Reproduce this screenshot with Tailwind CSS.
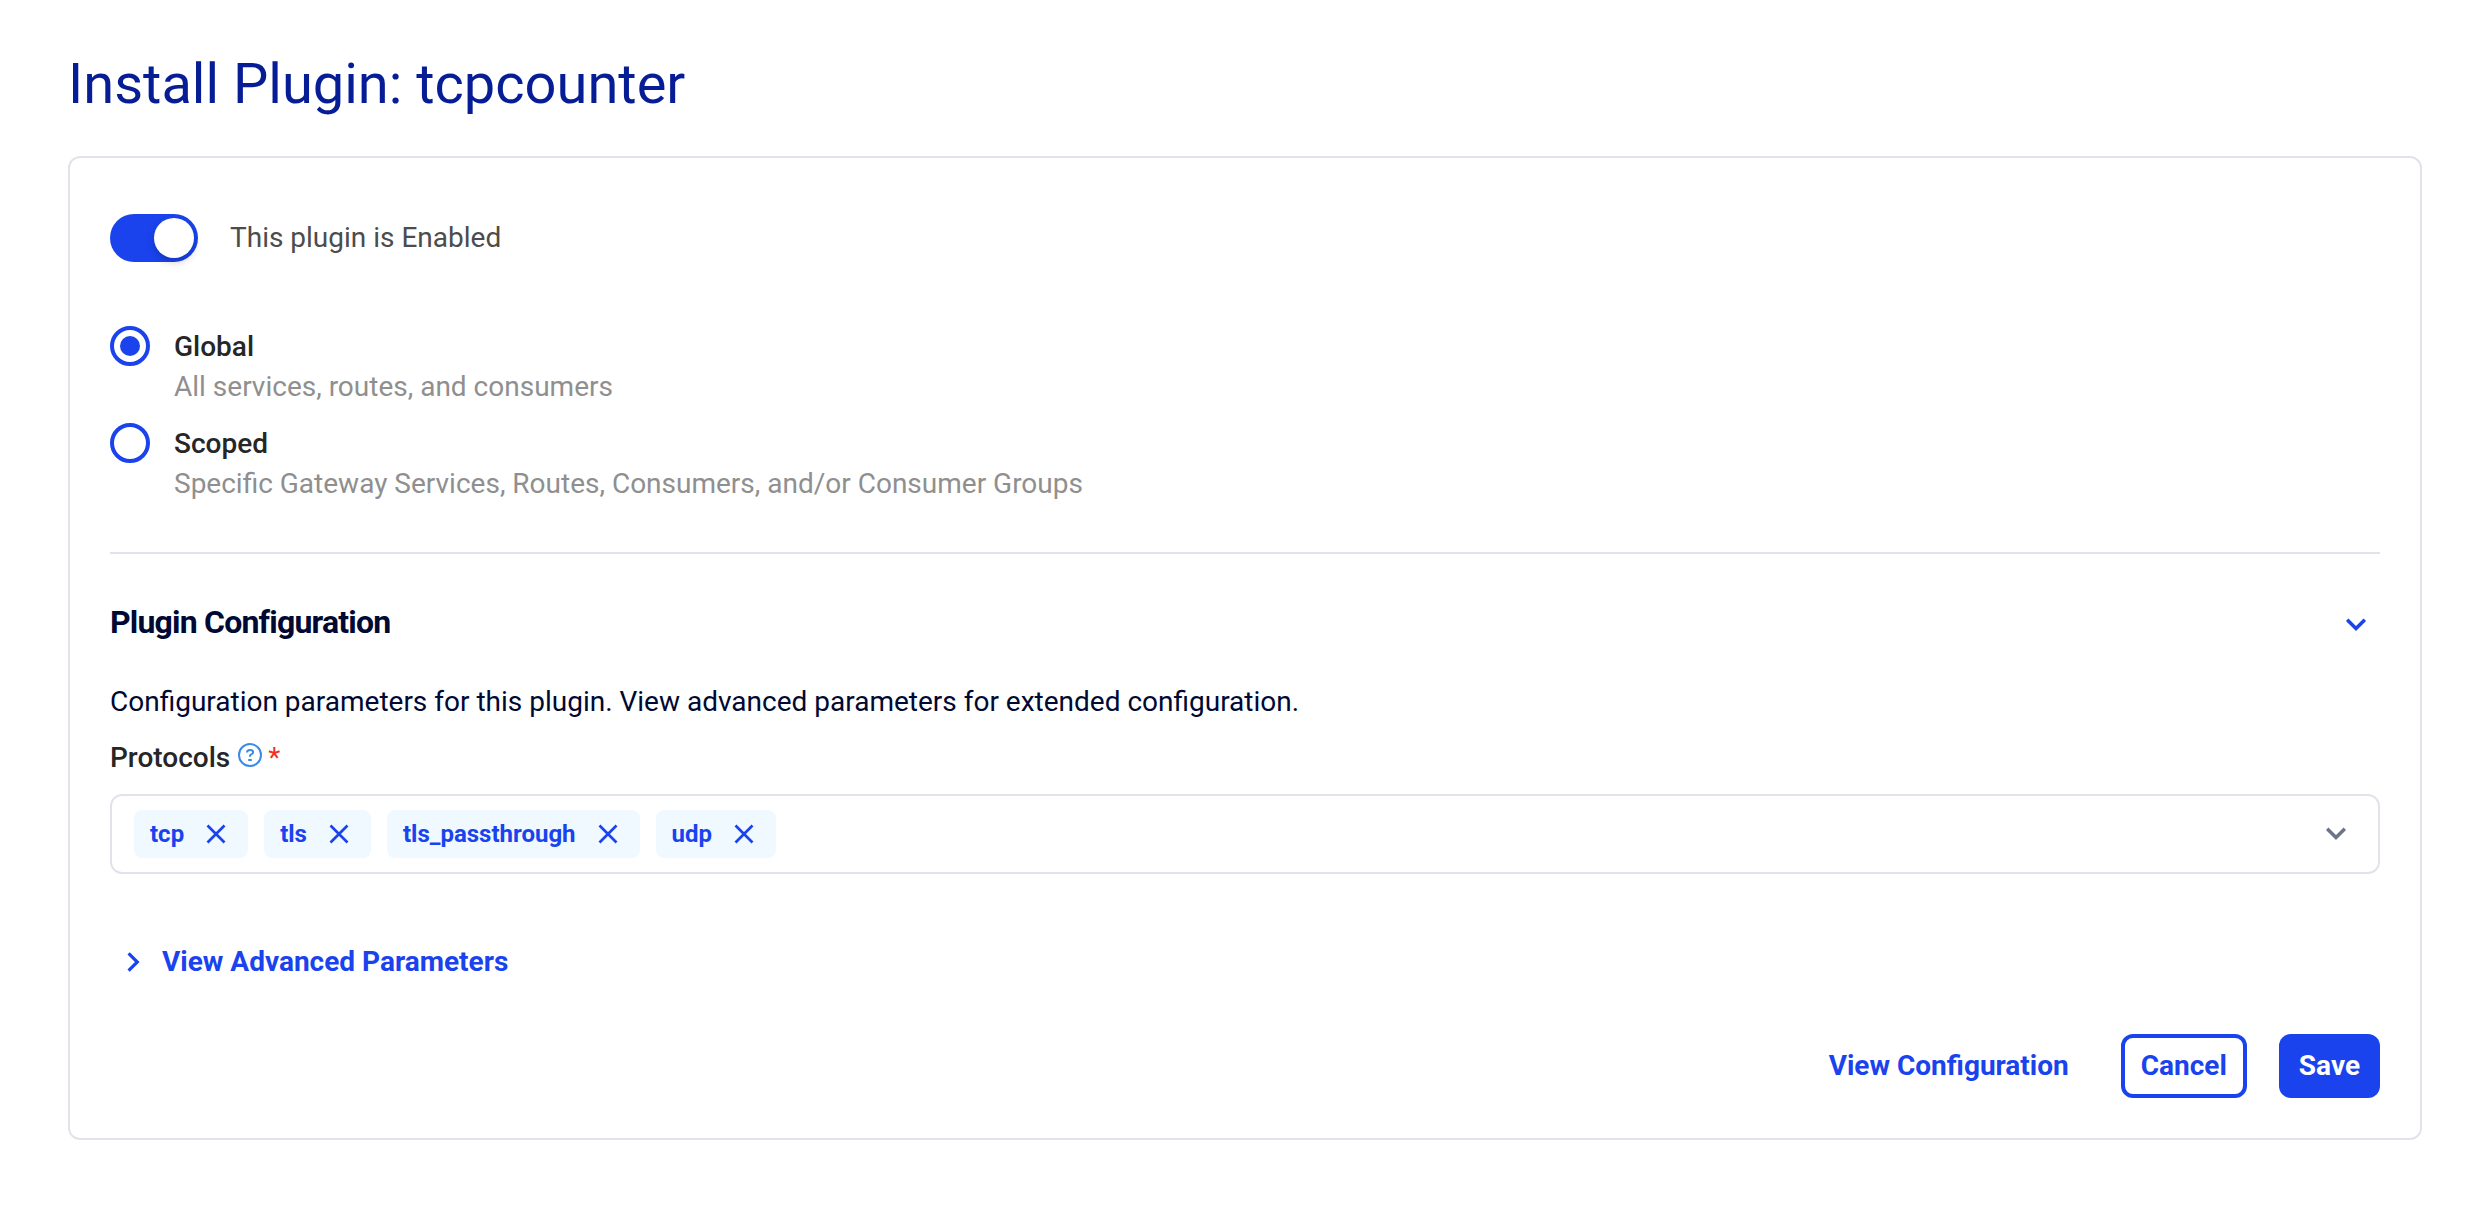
<!DOCTYPE html>
<html lang="en">
<head>
<meta charset="utf-8">
<title>Install Plugin: tcpcounter</title>
<script src="https://cdn.jsdelivr.net/npm/@tailwindcss/browser@4"></script>
</head>
<body class="bg-white font-[Roboto,sans-serif] text-[28px] leading-10">
<main class="pt-[52px] pr-[62px] pb-[72px] pl-[68px]">
  <h1 class="text-[56px] leading-16 text-[#071d95]">Install Plugin: tcpcounter</h1>

  <form class="mt-10 rounded-xl border-2 border-[#e0e4ea] px-10 pt-14 pb-10">
    <label class="flex w-fit items-center gap-8 text-[#4c4c4c]">
      <input type="checkbox" role="switch" checked class="h-12 w-22 appearance-none rounded-full bg-[#a3a6b7] p-1 before:block before:size-10 before:rounded-full before:bg-white before:shadow-[0_4px_8px_rgba(0,0,0,0.2)] checked:bg-[#1a43ee] checked:before:ml-10">
      This plugin is Enabled
    </label>

    <fieldset class="mt-16 flex flex-col gap-4" aria-label="Plugin scope">
      <div class="flex items-start gap-6">
        <input id="scope-global" type="radio" name="scope" checked aria-describedby="scope-global-help" class="grid size-10 shrink-0 appearance-none place-content-center rounded-full border-4 border-[#1a43ee] before:size-5 before:rounded-full checked:before:bg-[#1a43ee]">
        <div class="pt-px">
          <label for="scope-global" class="block font-medium text-[#262626]">Global</label>
          <p id="scope-global-help" class="text-[#8f8f8f]">All services, routes, and consumers</p>
        </div>
      </div>
      <div class="flex items-start gap-6">
        <input id="scope-scoped" type="radio" name="scope" aria-describedby="scope-scoped-help" class="grid size-10 shrink-0 appearance-none place-content-center rounded-full border-4 border-[#1a43ee] before:size-5 before:rounded-full checked:before:bg-[#1a43ee]">
        <div class="pt-px">
          <label for="scope-scoped" class="block font-medium text-[#262626]">Scoped</label>
          <p id="scope-scoped-help" class="text-[#8f8f8f]">Specific Gateway Services, Routes, Consumers, and/or Consumer Groups</p>
        </div>
      </div>
    </fieldset>

    <hr class="mt-12 border-t-2 border-[#e0e4ea]">

    <section class="mt-12">
      <div class="flex items-center justify-between pr-2">
        <h2 class="text-[32px] font-bold tracking-tight text-[#000933]">Plugin Configuration</h2>
        <button type="button" aria-label="Collapse plugin configuration" class="pt-1 text-[#1a43ee]">
          <svg class="size-8" viewBox="0 0 32 32" fill="none" stroke="currentColor" stroke-width="3.500"><path d="M7.200 11.800l8.800 8.800 8.800-8.800"/></svg>
        </button>
      </div>
      <p class="mt-10 text-[#000933]">Configuration parameters for this plugin. View advanced parameters for extended configuration.</p>

      <div class="mt-4 flex items-center">
        <span id="protocols-label" class="font-medium text-[#262626]">Protocols</span>
        <button type="button" aria-label="About protocols" class="ml-2 pb-1.5 text-[#3a8be8]">
          <svg class="size-6" viewBox="0 0 24 24" fill="none" stroke="currentColor" stroke-width="2"><circle cx="12" cy="12" r="11"/><path d="M9 9.500C9 7.800 10.300 7 12 7s3.100.8 3.100 2.300c0 1.300-.9 1.700-1.900 2.100-.9.300-1.200.7-1.200 1.600v.800M10.200 17h3.600"/></svg>
        </button>
        <span class="ml-1.5 text-[#f0321f]" title="Required">*</span>
      </div>

      <div role="group" aria-labelledby="protocols-label" class="mt-4 flex h-20 items-center justify-between rounded-xl border-2 border-[#e0e4ea] pr-[26px] pl-[22px]">
        <ul class="flex gap-4 text-2xl font-bold text-[#1a43ee]">
          <li class="flex h-12 items-center gap-4 rounded-lg bg-[#f0f9ff] px-4">tcp
            <button type="button" aria-label="Remove tcp"><svg class="size-8" viewBox="0 0 32 32" fill="none" stroke="currentColor" stroke-width="2.700"><path d="M7.500 7.500l17 17M24.500 7.500l-17 17"/></svg></button></li>
          <li class="flex h-12 items-center gap-4 rounded-lg bg-[#f0f9ff] px-4">tls
            <button type="button" aria-label="Remove tls"><svg class="size-8" viewBox="0 0 32 32" fill="none" stroke="currentColor" stroke-width="2.700"><path d="M7.500 7.500l17 17M24.500 7.500l-17 17"/></svg></button></li>
          <li class="flex h-12 items-center gap-4 rounded-lg bg-[#f0f9ff] px-4">tls_passthrough
            <button type="button" aria-label="Remove tls_passthrough"><svg class="size-8" viewBox="0 0 32 32" fill="none" stroke="currentColor" stroke-width="2.700"><path d="M7.500 7.500l17 17M24.500 7.500l-17 17"/></svg></button></li>
          <li class="flex h-12 items-center gap-4 rounded-lg bg-[#f0f9ff] px-4">udp
            <button type="button" aria-label="Remove udp"><svg class="size-8" viewBox="0 0 32 32" fill="none" stroke="currentColor" stroke-width="2.700"><path d="M7.500 7.500l17 17M24.500 7.500l-17 17"/></svg></button></li>
        </ul>
        <button type="button" aria-label="Show protocols" class="text-[#6c7489]">
          <svg class="size-8" viewBox="0 0 32 32" fill="none" stroke="currentColor" stroke-width="3.500"><path d="M7.200 10.800l8.800 8.800 8.800-8.800"/></svg>
        </button>
      </div>
    </section>

    <button type="button" class="mt-[68px] flex items-center gap-3 pl-2 font-bold text-[#1a43ee]">
      <svg class="size-8" viewBox="0 0 32 32" fill="none" stroke="currentColor" stroke-width="3.200"><path d="M10.600 7.300l8.700 8.700-8.700 8.700"/></svg>
      View Advanced Parameters
    </button>

    <div class="mt-[52px] flex items-center justify-end gap-8 font-bold text-[#1a43ee]">
      <button type="button" class="h-16 px-5">View Configuration</button>
      <button type="button" class="h-16 rounded-xl border-4 border-[#1a43ee] px-4">Cancel</button>
      <button type="submit" class="h-16 rounded-xl bg-[#1a43ee] px-5 text-white">Save</button>
    </div>
  </form>
</main>
</body>
</html>
